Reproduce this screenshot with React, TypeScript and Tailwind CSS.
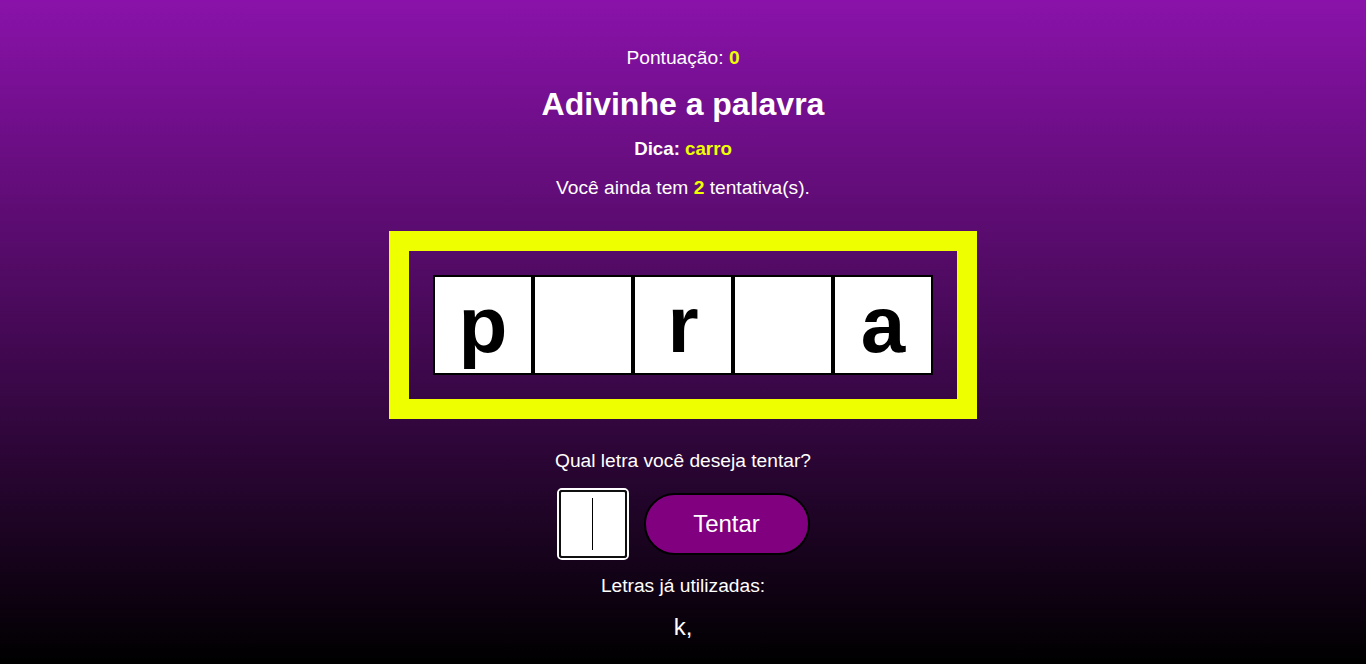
const word = ['p', '', 'r', '', 'a'];
const usedLetters = ['k'];

function Tile({ letter }: { letter: string }) {
  return (
    <div className="w-[100px] h-[100px] border-2 border-black bg-white flex items-center justify-center">
      <span className="text-[80px] font-bold leading-[96px] text-black">{letter}</span>
    </div>
  );
}

export default function App() {
  return (
    <div className="h-screen w-full overflow-hidden bg-[linear-gradient(to_bottom,#8a12aa,#000000)] font-['Liberation_Sans',Arial,sans-serif] text-white flex flex-col items-center">
      <p className="mt-[47px] text-[19.2px] leading-[22px]">
        Pontuação: <span className="font-bold text-[#eeff00]">0</span>
      </p>

      <h1 className="mt-[17px] text-[32px] font-bold leading-[37px]">Adivinhe a palavra</h1>

      <h3 className="mt-[15px] text-[18.72px] font-bold leading-[22px]">
        Dica: <span className="text-[#eeff00]">carro</span>
      </h3>

      <p className="mt-[17px] text-[19.2px] leading-[22px]">
        Você ainda tem <span className="font-bold text-[#eeff00]">2</span> tentativa(s).
      </p>

      {/* board */}
      <div className="mt-[32px] border-[20px] border-[#eeff00] p-[24px] flex">
        {word.map((l, i) => (
          <Tile key={i} letter={l} />
        ))}
      </div>

      <p className="mt-[31px] text-[19.2px] leading-[22px]">Qual letra você deseja tentar?</p>

      <div className="mt-[16px] flex items-center gap-[15px]">
        <div className="w-[72px] h-[72px] rounded-[5px] border-2 border-white">
          <div className="w-full h-full rounded-[3px] border-2 border-[#101010] bg-white flex items-center justify-center">
            <span className="w-px h-[52px] bg-black" />
          </div>
        </div>
        <button className="w-[166px] h-[62px] rounded-full border-2 border-black bg-[#800080] text-white text-[24px]">
          Tentar
        </button>
      </div>

      <p className="mt-[15px] text-[19.2px] leading-[22px]">Letras já utilizadas:</p>

      <p className="mt-[16px] text-[24px] leading-[28px]">
        {usedLetters.map((l) => `${l},`).join(' ')}
      </p>
    </div>
  );
}
